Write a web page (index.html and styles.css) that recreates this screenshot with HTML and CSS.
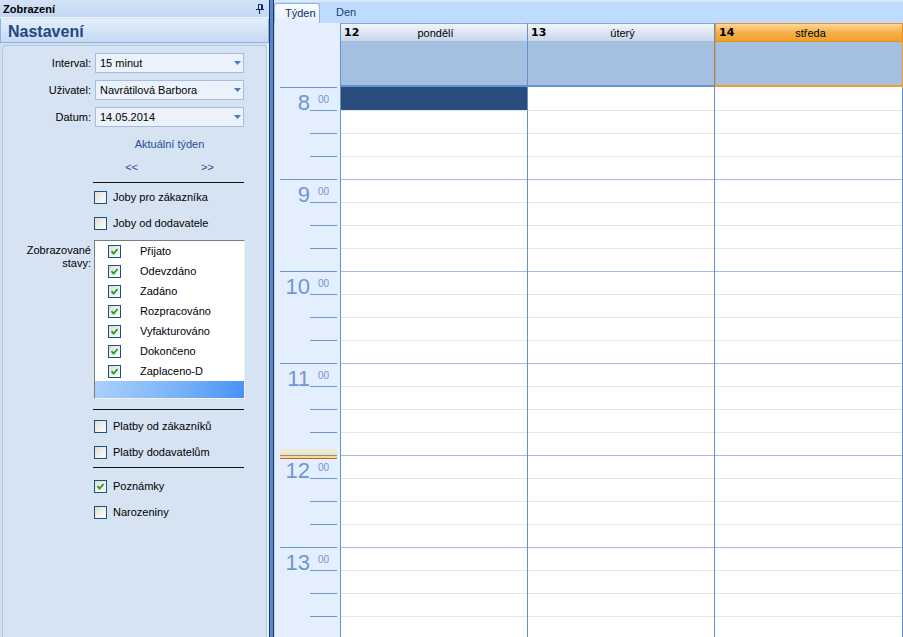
FILE: index.html
```html
<!DOCTYPE html>
<html lang="cs">
<head>
<meta charset="utf-8">
<title>Zobrazení</title>
<link rel="stylesheet" href="styles.css">
</head>
<body>
<div class="app">
  <aside class="side">
    <div class="side-title">
      <span>Zobrazení</span>
      <svg class="pin" width="8" height="10" viewBox="0 0 8 10"><path d="M2.5 0.5H5.5M2.5 0.5V5M5.5 0.5V5M6.5 0.5V5M0 5.5H8M3.5 6V10" stroke="#0b2657" stroke-width="1" fill="none"/></svg>
    </div>
    <div class="side-head">Nastavení</div>
    <div class="side-body">
      <div class="panel">
        <div class="row mt7">
          <span class="lbl">Interval:</span>
          <div class="combo"><span>15 minut</span><svg width="7" height="4" viewBox="0 0 7 4"><path d="M0 0H7L3.5 4Z" fill="#4a78bb"/></svg></div>
        </div>
        <div class="row mt7">
          <span class="lbl">Uživatel:</span>
          <div class="combo"><span>Navrátilová Barbora</span><svg width="7" height="4" viewBox="0 0 7 4"><path d="M0 0H7L3.5 4Z" fill="#4a78bb"/></svg></div>
        </div>
        <div class="row mt7">
          <span class="lbl">Datum:</span>
          <div class="combo"><span>14.05.2014</span><svg width="7" height="4" viewBox="0 0 7 4"><path d="M0 0H7L3.5 4Z" fill="#4a78bb"/></svg></div>
        </div>
        <div class="row link-row">
          <span></span>
          <span class="link">Aktuální týden</span>
        </div>
        <div class="row nav-row">
          <span></span>
          <div class="nav"><span>&lt;&lt;</span><span>&gt;&gt;</span></div>
        </div>
        <div class="sep sep1"></div>
        <div class="row chk first">
          <span></span>
          <div class="chk-item"><span class="box"></span>Joby pro zákazníka</div>
        </div>
        <div class="row chk">
          <span></span>
          <div class="chk-item"><span class="box"></span>Joby od dodavatele</div>
        </div>
        <div class="row list-row">
          <span class="lbl lbl-top">Zobrazované<br>stavy:</span>
          <div class="list">
            <div class="li"><span class="box"><svg viewBox="0 0 11 11"><path d="M2.5 5.2L4.6 7.6L8.6 3" stroke="#1fa21f" stroke-width="1.9" fill="none"/></svg></span>Přijato</div>
            <div class="li"><span class="box"><svg viewBox="0 0 11 11"><path d="M2.5 5.2L4.6 7.6L8.6 3" stroke="#1fa21f" stroke-width="1.9" fill="none"/></svg></span>Odevzdáno</div>
            <div class="li"><span class="box"><svg viewBox="0 0 11 11"><path d="M2.5 5.2L4.6 7.6L8.6 3" stroke="#1fa21f" stroke-width="1.9" fill="none"/></svg></span>Zadáno</div>
            <div class="li"><span class="box"><svg viewBox="0 0 11 11"><path d="M2.5 5.2L4.6 7.6L8.6 3" stroke="#1fa21f" stroke-width="1.9" fill="none"/></svg></span>Rozpracováno</div>
            <div class="li"><span class="box"><svg viewBox="0 0 11 11"><path d="M2.5 5.2L4.6 7.6L8.6 3" stroke="#1fa21f" stroke-width="1.9" fill="none"/></svg></span>Vyfakturováno</div>
            <div class="li"><span class="box"><svg viewBox="0 0 11 11"><path d="M2.5 5.2L4.6 7.6L8.6 3" stroke="#1fa21f" stroke-width="1.9" fill="none"/></svg></span>Dokončeno</div>
            <div class="li"><span class="box"><svg viewBox="0 0 11 11"><path d="M2.5 5.2L4.6 7.6L8.6 3" stroke="#1fa21f" stroke-width="1.9" fill="none"/></svg></span>Zaplaceno-D</div>
            <div class="li-sel"></div>
          </div>
        </div>
        <div class="sep sep2"></div>
        <div class="row chk after2">
          <span></span>
          <div class="chk-item"><span class="box"></span>Platby od zákazníků</div>
        </div>
        <div class="row chk">
          <span></span>
          <div class="chk-item"><span class="box"></span>Platby dodavatelům</div>
        </div>
        <div class="sep sep3"></div>
        <div class="row chk after3">
          <span></span>
          <div class="chk-item"><span class="box"><svg viewBox="0 0 11 11"><path d="M2.5 5.2L4.6 7.6L8.6 3" stroke="#1fa21f" stroke-width="1.9" fill="none"/></svg></span>Poznámky</div>
        </div>
        <div class="row chk">
          <span></span>
          <div class="chk-item"><span class="box"></span>Narozeniny</div>
        </div>
      </div>
    </div>
  </aside>

  <div class="splitter"></div>

  <main class="cal">
    <div class="tabs">
      <div class="tab active">Týden</div>
      <div class="tab">Den</div>
    </div>
    <div class="cal-body">
      <div class="timecol">
        <div class="hour"><div class="hlabel"><span class="hnum">8</span><span class="hmin">00</span></div><div class="q"></div><div class="q"></div><div class="q"></div></div>
        <div class="hour"><div class="hlabel"><span class="hnum">9</span><span class="hmin">00</span></div><div class="q"></div><div class="q"></div><div class="q"></div></div>
        <div class="hour"><div class="hlabel"><span class="hnum">10</span><span class="hmin">00</span></div><div class="q"></div><div class="q"></div><div class="q"></div></div>
        <div class="hour"><div class="hlabel"><span class="hnum">11</span><span class="hmin">00</span></div><div class="q"></div><div class="q"></div><div class="q"></div></div>
        <div class="hour"><div class="now"></div><div class="hlabel"><span class="hnum">12</span><span class="hmin">00</span></div><div class="q"></div><div class="q"></div><div class="q"></div></div>
        <div class="hour"><div class="hlabel"><span class="hnum">13</span><span class="hmin">00</span></div><div class="q"></div><div class="q"></div><div class="q"></div></div>
      </div>
      <div class="day">
        <div class="dhead"><b class="dnum">12</b><span class="dname">pondělí</span></div>
        <div class="allday"></div>
        <div class="slots"><div class="sel"></div></div>
      </div>
      <div class="day">
        <div class="dhead"><b class="dnum">13</b><span class="dname">úterý</span></div>
        <div class="allday"></div>
        <div class="slots"></div>
      </div>
      <div class="day today">
        <div class="dhead"><b class="dnum">14</b><span class="dname">středa</span></div>
        <div class="allday"></div>
        <div class="slots"></div>
      </div>
    </div>
  </main>
</div>
</body>
</html>
```

FILE: styles.css
```css
html, body {
  margin: 0;
  padding: 0;
}
body {
  width: 903px;
  height: 637px;
  overflow: hidden;
  font-family: "Liberation Sans", Arial, sans-serif;
  font-size: 11px;
  color: #000;
  background: #d6e3f2;
}
.app {
  display: flex;
  height: 637px;
}

/* ---------- left panel ---------- */
.side {
  width: 269px;
  flex: none;
  display: flex;
  flex-direction: column;
}
.side-title {
  height: 18px;
  box-sizing: border-box;
  display: flex;
  align-items: center;
  justify-content: space-between;
  padding: 0 5px 0 3px;
  background: linear-gradient(#d3e3f7, #c2d7f2);
  border-bottom: 1px solid #edf3fb;
  font-weight: bold;
}
.pin {
  display: block;
  margin-top: 1px;
}
.side-head {
  height: 25px;
  box-sizing: border-box;
  border: 1px solid #8fb1dd;
  border-top-color: #dce8f8;
  background: linear-gradient(#e4eefc, #c5daf5);
  color: #22487e;
  font-size: 16px;
  font-weight: bold;
  line-height: 21px;
  padding: 2px 0 0 7px;
}
.side-body {
  flex: 1;
  display: flex;
  background: #d1deef;
  padding: 2px 0 0 2px;
  border-right: 2px solid #e7eef7;
}
.panel {
  flex: 1;
  border: 1px solid #b3c7e2;
  border-bottom: none;
  border-radius: 4px 4px 0 0;
  background: #d6e3f2;
}
.row {
  display: grid;
  grid-template-columns: 88px 149px;
  column-gap: 4px;
  align-items: center;
}
.mt7 {
  margin-top: 7px;
}
.lbl {
  text-align: right;
}
.lbl-top {
  align-self: start;
  padding-top: 4px;
  line-height: 13px;
}
.combo {
  height: 20px;
  box-sizing: border-box;
  border: 1px solid #a6bddb;
  background: #ebf2fb;
  display: flex;
  align-items: center;
  justify-content: space-between;
  padding: 0 2px 0 4px;
}
.combo svg {
  display: block;
}
.link-row {
  margin-top: 9px;
  height: 16px;
}
.link {
  text-align: center;
  color: #1e4d94;
}
.nav-row {
  margin-top: 7px;
  height: 16px;
}
.nav {
  display: flex;
  justify-content: center;
  gap: 63px;
  color: #1e4d94;
}
.sep {
  height: 1px;
  width: 151px;
  margin-left: 90px;
  background: #111;
}
.sep1 { margin-top: 7px; }
.sep2 { margin-top: 10px; }
.sep3 { margin-top: 2px; }
.chk {
  height: 26px;
}
.chk.first { margin-top: 1px; }
.chk.after2 { margin-top: 3px; }
.chk.after3 { margin-top: 5px; }
.chk-item {
  display: flex;
  align-items: center;
  gap: 6px;
  margin-left: -1px;
}
.box {
  width: 13px;
  height: 13px;
  box-sizing: border-box;
  flex: none;
  border: 1px solid #1c5180;
  background: linear-gradient(135deg, #dcdcd6 0%, #eeeeea 45%, #fbfbfa 100%);
  display: flex;
}
.box svg {
  width: 11px;
  height: 11px;
}
.list-row {
  margin-top: 4px;
}
.list {
  margin-left: -1px;
  width: 151px;
  height: 159px;
  box-sizing: border-box;
  background: #fff;
  border: 1px solid #f2f2f2;
  border-top-color: #7c7c7c;
  border-left-color: #7c7c7c;
  display: flex;
  flex-direction: column;
}
.li {
  height: 20px;
  display: flex;
  align-items: center;
  padding-left: 13px;
}
.li .box {
  margin-right: 19px;
}
.li-sel {
  height: 17px;
  background: linear-gradient(100deg, #abd0fb 0%, #7ab3f9 55%, #4692f7 100%);
}

/* ---------- splitter ---------- */
.splitter {
  width: 5px;
  flex: none;
  background: linear-gradient(to right, #1e3a68 0 1px, #5b87c8 1px 4px, #1e3a68 4px 5px);
}

/* ---------- calendar ---------- */
.cal {
  flex: 1;
  min-width: 0;
  display: flex;
  flex-direction: column;
  background: #e3efff;
}
.tabs {
  height: 23px;
  flex: none;
  box-sizing: border-box;
  display: flex;
  align-items: flex-end;
  background: linear-gradient(#d8e8fd 0 2px, #bfdbff 2px);
}
.tab {
  height: 20px;
  box-sizing: border-box;
  line-height: 19px;
  padding: 0 0 0 16px;
  color: #1a3f76;
}
.tab.active {
  width: 46px;
  padding-left: 10px;
  color: #0f2d5e;
  background: linear-gradient(#fbfdff, #e3efff);
  border: 1px solid #8db2e3;
  border-bottom: none;
  border-radius: 3px 3px 0 0;
}
.cal-body {
  flex: 1;
  display: flex;
  min-height: 0;
  overflow: hidden;
}
.timecol {
  width: 67px;
  flex: none;
  box-sizing: border-box;
  border-right: 1px solid #6591cd;
  border-left: 1px solid #c4d9f5;
  background: #e3efff;
  padding-top: 64px;
}
.hour {
  position: relative;
  height: 92px;
  box-sizing: border-box;
  border-top: 1px solid #6d95cf;
  margin: 0 3px 0 5px;
}
.hlabel {
  height: 22px;
  display: flex;
  align-items: flex-start;
}
.hnum {
  width: 30px;
  flex: none;
  text-align: right;
  font-size: 22px;
  line-height: 22px;
  padding-top: 4px;
  color: #6f96d1;
}
.hmin {
  font-size: 10px;
  line-height: 10px;
  margin: 7px 0 0 8px;
  color: #6f96d1;
}
.q {
  height: 23px;
  box-sizing: border-box;
  border-top: 1px solid #6d95cf;
  margin-left: 30px;
}
.now {
  position: absolute;
  top: -7px;
  left: 0;
  right: 0;
  height: 9px;
  border-bottom: 1px solid #cc6412;
  background:
    linear-gradient(#6d95cf, #6d95cf) 0 6px / 100% 1px no-repeat,
    linear-gradient(#f1eee3, #f8d88a);
}
.day {
  width: 187px;
  flex: none;
  box-sizing: border-box;
  border-right: 1px solid #6591cd;
  display: flex;
  flex-direction: column;
}
.day.today {
  flex: 1;
  width: auto;
  border-right: none;
}
.dhead {
  height: 19px;
  flex: none;
  box-sizing: border-box;
  border-top: 1px solid #86a9d9;
  border-bottom: 1px solid #a3bcdf;
  background: linear-gradient(#f1f5fb, #c8d7eb);
  display: grid;
  grid-template-columns: 1fr auto 1fr;
  align-items: center;
  padding-left: 3px;
}
.dnum {
  font-family: "DejaVu Sans", Verdana, sans-serif;
  font-size: 11px;
  font-weight: bold;
}
.allday {
  height: 45px;
  flex: none;
  box-sizing: border-box;
  background: #a5bfe0;
  border-bottom: 2px solid #6591cd;
}
.slots {
  flex: 1;
  background:
    linear-gradient(#fff, #fff) 0 0 / 100% 1px no-repeat,
    repeating-linear-gradient(to bottom,
      #a4bddf 0 1px,
      transparent 1px 23px,
      #dfe6f2 23px 24px,
      transparent 24px 46px,
      #dfe6f2 46px 47px,
      transparent 47px 69px,
      #dfe6f2 69px 70px,
      transparent 70px 92px),
    #fff;
}
.sel {
  height: 23px;
  background: #2b4c7e;
}
.today .dhead {
  border: 1px solid #e8931f;
  background: linear-gradient(#fbd89a, #f4b04a 50%, #efa12d);
}
.today .allday {
  border-left: 1px solid #efa02c;
  border-right: 1px solid #efa02c;
  border-bottom-color: #f0a030;
}
.today .slots {
  border-right: 1px solid #6591cd;
}
```
